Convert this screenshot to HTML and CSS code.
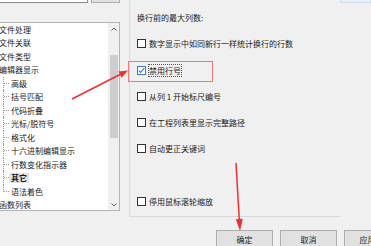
FILE: index.html
```html
<!DOCTYPE html>
<html lang="zh">
<head>
    <meta charset="UTF-8">
    <title>设置</title>
    <link rel="stylesheet" href="styles.css">
</head>
<body>
    <div class="dialog">
        <div class="panes">
            <div class="left">
                <div class="top-row">
                    <div class="field"></div>
                    <div class="small-btn"></div>
                </div>
                <div class="tree">
                    <div class="items">
                        <div class="node">文件处理</div>
                        <div class="node">文件关联</div>
                        <div class="node">文件类型</div>
                        <div class="node">编辑器显示</div>
                        <div class="node child"><span class="guide"></span>高级</div>
                        <div class="node child"><span class="guide"></span>括号匹配</div>
                        <div class="node child"><span class="guide"></span>代码折叠</div>
                        <div class="node child"><span class="guide"></span>光标/脱符号</div>
                        <div class="node child"><span class="guide"></span>格式化</div>
                        <div class="node child"><span class="guide"></span>十六进制编辑显示</div>
                        <div class="node child"><span class="guide"></span>行数变化指示器</div>
                        <div class="node child"><span class="guide"></span><span class="selected">其它</span></div>
                        <div class="node child last"><span class="guide"></span>语法着色</div>
                        <div class="node">函数列表</div>
                    </div>
                    <div class="scroll">
                        <div class="arrow">
                            <svg width="6" height="4" viewBox="0 0 6 4"><polyline points="0.5,3.5 3,1 5.5,3.5" fill="none" stroke="#606060" stroke-width="1"/></svg>
                        </div>
                        <div class="thumb"></div>
                        <div class="arrow down">
                            <svg width="6" height="4" viewBox="0 0 6 4"><polyline points="0.5,0.5 3,3 5.5,0.5" fill="none" stroke="#606060" stroke-width="1"/></svg>
                        </div>
                    </div>
                </div>
            </div>

            <div class="group">
                <div class="row">换行前的最大列数:</div>
                <div class="row"><span class="box"></span>数字显示中如同新行一样统计换行的行数</div>
                <div class="row"><span class="box checked"><svg width="7" height="7" viewBox="0 0 7 7"><polyline points="0.8,3.6 2.6,5.5 6.3,1.2" fill="none" stroke="#2a6fcc" stroke-width="1.1"/></svg></span><span class="focus">禁用行号</span></div>
                <div class="row"><span class="box"></span>从列 1 开始标尺编号</div>
                <div class="row"><span class="box"></span>在工程列表里显示完整路径</div>
                <div class="row"><span class="box"></span>自动更正关键词</div>
                <div class="row spaced"><span class="box"></span>停用鼠标滚轮缩放</div>
            </div>

            <div class="corner"></div>
        </div>

        <div class="buttons">
            <button class="btn">确定</button>
            <button class="btn">取消</button>
            <button class="btn apply">应用</button>
        </div>

        <div class="mark"></div>
        <svg class="arrows" width="371" height="246" viewBox="0 0 371 246">
            <line x1="72" y1="99" x2="121" y2="74" stroke="#ee3030" stroke-width="1.5"/>
            <polygon points="128,70.5 121.6,77.7 118.4,71.5" fill="#ee3030"/>
            <line x1="236" y1="163" x2="239.3" y2="220" stroke="#ee3030" stroke-width="1.5"/>
            <polygon points="240,231 242.8,218.8 235.8,219.2" fill="#ee3030"/>
        </svg>
    </div>
</body>
</html>
```

FILE: styles.css
```css
body {
    margin: 0;
    background-color: #f0f0f0;
    font-family: "Noto Sans CJK SC", sans-serif;
    font-size: 8px;
    color: #1a1a1a;
    overflow: hidden;
}
.dialog {
    position: relative;
    width: 371px;
    height: 246px;
    display: flex;
    flex-direction: column;
    overflow: hidden;
}
.panes {
    display: flex;
    align-items: flex-start;
    height: 217px;
}
.left {
    margin-left: -4px;
    width: 124px;
    display: flex;
    flex-direction: column;
}
.top-row {
    display: flex;
    gap: 3px;
    margin-top: -15px;
    height: 18px;
}
.field {
    width: 92px;
    background-color: #fff;
    border: 1px solid #8a8a8a;
    box-sizing: border-box;
}
.small-btn {
    width: 29px;
    background-color: #e1e1e1;
    border: 1px solid #adadad;
    box-sizing: border-box;
}
.tree {
    margin-top: 19px;
    height: 189px;
    background-color: #fff;
    border: 1px solid #b4b4b4;
    box-sizing: border-box;
    display: flex;
}
.items {
    flex: 1;
    padding-left: 2px;
    margin-top: -0.5px;
}
.node {
    height: 13.5px;
    line-height: 13.5px;
    white-space: nowrap;
    display: flex;
    align-items: center;
}
.guide {
    align-self: stretch;
    width: 5px;
    margin-left: 4px;
    margin-right: 2px;
    border-left: 1px dotted #9a9a9a;
    background-image: repeating-linear-gradient(to right, #9a9a9a 0 1px, transparent 1px 2px);
    background-size: 100% 1px;
    background-position: left center;
    background-repeat: no-repeat;
}
.last .guide {
    align-self: flex-start;
    height: 7px;
    background-position: left bottom;
}
.selected {
    font-weight: bold;
    background-color: #e3e3e3;
    padding: 0 2px;
    margin-left: -2px;
    line-height: 10px;
}
.scroll {
    width: 11px;
    background-color: #f0f0f0;
    display: flex;
    flex-direction: column;
}
.arrow {
    height: 11px;
    display: flex;
    align-items: center;
    justify-content: center;
}
.arrow.down {
    margin-top: auto;
}
.thumb {
    margin: 21px 1.5px 0;
    height: 83px;
    background-color: #cdcdcd;
}
.group {
    margin-left: 9px;
    width: 211px;
    height: 217px;
    border-left: 1px solid #d9d9d9;
    border-bottom: 1px solid #d9d9d9;
    box-sizing: border-box;
    padding: 11px 0 0 7px;
    display: flex;
    flex-direction: column;
    gap: 13.3px;
}
.row {
    height: 13px;
    line-height: 13px;
    display: flex;
    align-items: center;
    white-space: nowrap;
}
.row.spaced {
    margin-top: 26.3px;
}
.box {
    width: 9px;
    height: 9px;
    border: 1px solid #333;
    background-color: #fff;
    box-sizing: border-box;
    margin-right: 3px;
    display: flex;
    align-items: center;
    justify-content: center;
}
.box.checked {
    border-color: #3a78c8;
}
.focus {
    outline: 1px dotted #555;
    line-height: 11px;
}
.corner {
    width: 31px;
    height: 18px;
    margin-top: -15px;
    background-color: #e5f1fb;
    border: 1px solid #cfdbe6;
    box-sizing: border-box;
}
.buttons {
    display: flex;
    gap: 7px;
    margin-top: 13px;
    padding-left: 216px;
}
.btn {
    flex: none;
    width: 57px;
    height: 18px;
    padding: 0;
    font-family: "Noto Sans CJK SC", sans-serif;
    font-size: 8px;
    line-height: 15px;
    color: #1a1a1a;
    background-color: #e1e1e1;
    border: 1px solid #adadad;
    box-sizing: border-box;
}
.btn.apply {
    width: 47px;
}
.mark {
    position: absolute;
    left: 128px;
    top: 61px;
    width: 85px;
    height: 21px;
    border: 1.5px solid #ef7a7a;
    box-sizing: border-box;
}
.arrows {
    position: absolute;
    left: 0;
    top: 0;
}
```
